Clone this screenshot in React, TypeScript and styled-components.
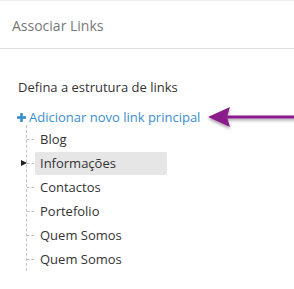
import React from "react";
import styled, { createGlobalStyle } from "styled-components";

const Global = createGlobalStyle`
  html, body { margin: 0; padding: 0; background: #fff; }
  body { font-family: "Open Sans", "Noto Sans", sans-serif; }
  * { box-sizing: border-box; }
`;

const Page = styled.div`
  position: relative;
  width: 294px;
  height: 289px;
  overflow: hidden;
  background: #fff;
`;

const Header = styled.div`
  height: 49px;
  border-top: 1px solid #eeeeee;
  border-bottom: 1px solid #dddddd;
  padding: 15px 12px 0;
  font-size: 14px;
  line-height: 19px;
  color: #777;
`;

const Body = styled.div`
  padding: 28px 0 0 17px;
`;

const Intro = styled.div`
  padding-left: 1px;
  font-size: 13px;
  line-height: 20px;
  color: #333;
`;

const AddLink = styled.a`
  display: flex;
  align-items: center;
  gap: 3px;
  margin-top: 10px;
  height: 20px;
  font-size: 13px;
  line-height: 20px;
  color: #3a8dd3;
  text-decoration: none;
  cursor: pointer;
`;

const Tree = styled.ul`
  list-style: none;
  margin: -2px 0 0 9px;
  padding: 2px 0 0 0;
  border-left: 1px dashed #c4c4c4;
  width: 160px;
`;

const Item = styled.li`
  position: relative;
  display: flex;
  align-items: center;
  height: 24px;
  padding-left: 8px;
  &::before {
    content: "";
    position: absolute;
    left: 0;
    top: 12px;
    width: 7px;
    border-top: 1px dashed #c4c4c4;
  }
`;

const Label = styled.span<{ $active?: boolean }>`
  display: block;
  width: 132px;
  height: 23px;
  padding: 0 5px;
  font-size: 13px;
  line-height: 23px;
  color: #333;
  border-radius: 2px;
  background: ${(p) => (p.$active ? "#e6e6e6" : "transparent")};
`;

const Toggle = styled.span`
  position: absolute;
  left: -6px;
  top: 9px;
  width: 0;
  height: 0;
  border-top: 3.5px solid transparent;
  border-bottom: 3.5px solid transparent;
  border-left: 6px solid #222;
`;

const Arrow = styled.svg`
  position: absolute;
  left: 208px;
  top: 107px;
  overflow: visible;
`;

const items = [
  { label: "Blog" },
  { label: "Informações", active: true, children: true },
  { label: "Contactos" },
  { label: "Portefolio" },
  { label: "Quem Somos" },
  { label: "Quem Somos" },
];

export default function App() {
  return (
    <Page>
      <Global />
      <Header>Associar Links</Header>
      <Body>
        <Intro>Defina a estrutura de links</Intro>
        <AddLink>
          <svg width="9" height="9" viewBox="0 0 9 9">
            <rect x="3.2" y="0" width="2.6" height="9" fill="#3a8dd3" />
            <rect x="0" y="3.2" width="9" height="2.6" fill="#3a8dd3" />
          </svg>
          Adicionar novo link principal
        </AddLink>
        <Tree>
          {items.map((it, i) => (
            <Item key={i}>
              {it.children && <Toggle />}
              <Label $active={it.active}>{it.label}</Label>
            </Item>
          ))}
        </Tree>
      </Body>
      <Arrow width="88" height="20" viewBox="0 0 88 20">
        <defs>
          <filter id="sh" x="-20%" y="-50%" width="140%" height="220%">
            <feDropShadow dx="0" dy="2" stdDeviation="1.5" floodColor="#000" floodOpacity="0.35" />
          </filter>
        </defs>
        <g filter="url(#sh)">
          <polygon points="0,10 22,0 19,10 22,20" fill="#8b1c8c" />
          <rect x="18" y="8.5" width="72" height="3" fill="#8b1c8c" />
        </g>
      </Arrow>
    </Page>
  );
}
